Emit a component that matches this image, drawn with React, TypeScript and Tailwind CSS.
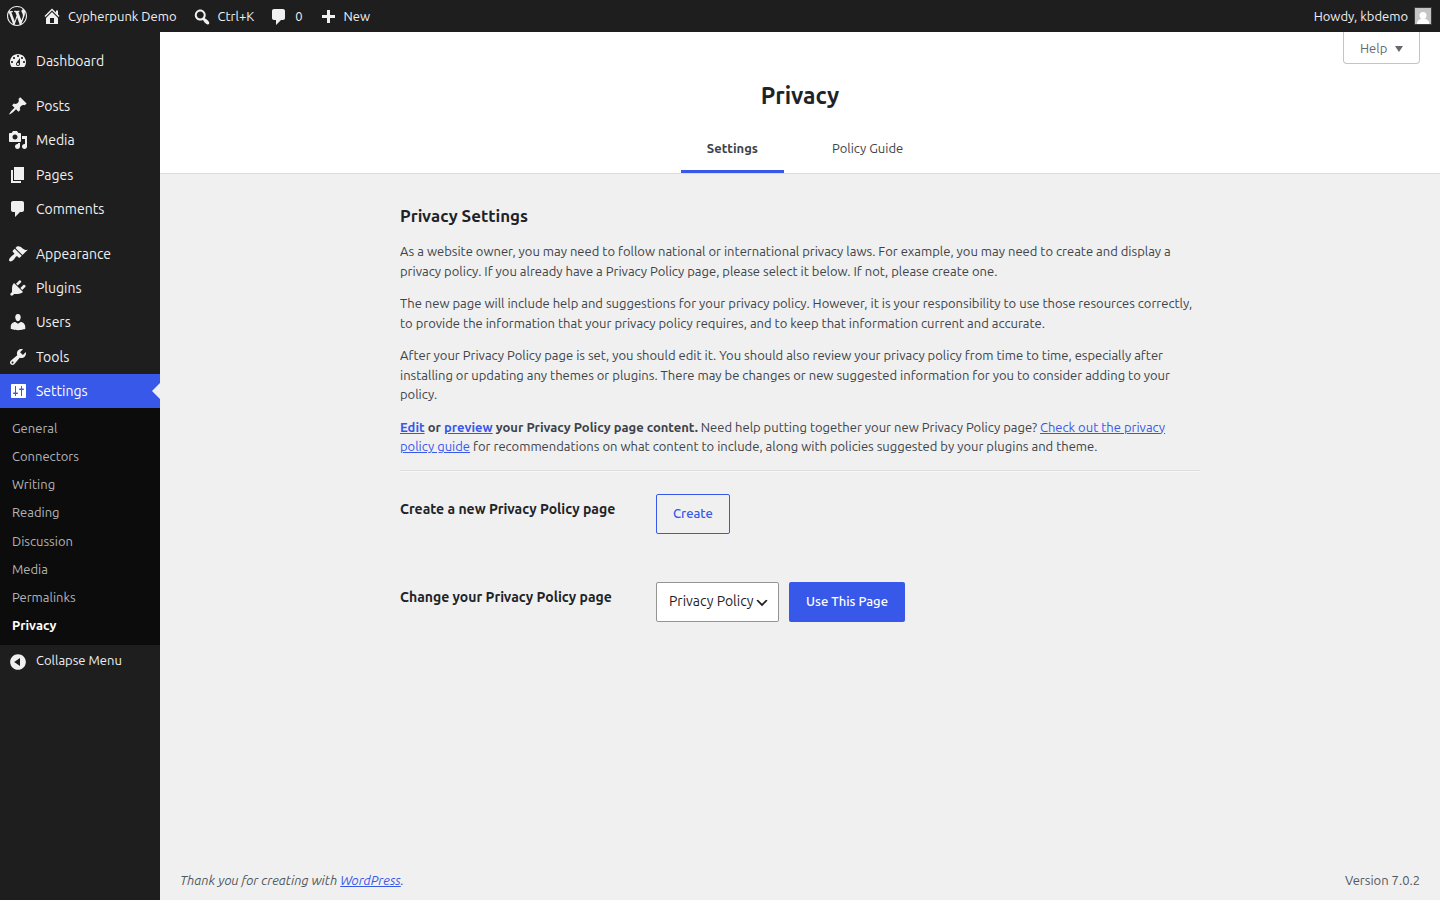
import type { ReactNode } from 'react';

const ICONS = {
  wordpress:
    'M20 10c0-5.51-4.49-10-10-10C4.48 0 0 4.49 0 10c0 5.52 4.48 10 10 10 5.51 0 10-4.48 10-10zM7.78 15.37L4.37 6.22c.55-.02 1.17-.08 1.17-.08.5-.06.44-1.13-.06-1.11 0 0-1.45.11-2.37.11-.18 0-.37 0-.58-.01C4.12 2.69 6.87 1.11 10 1.11c2.33 0 4.45.87 6.05 2.34-.68-.11-1.65.39-1.65 1.58 0 .74.45 1.36.9 2.1.35.61.55 1.36.55 2.46 0 1.49-1.4 5-1.4 5l-3.03-8.37c.54-.02.82-.17.82-.17.5-.05.44-1.25-.06-1.22 0 0-1.44.12-2.38.12-.87 0-2.33-.12-2.33-.12-.5-.03-.56 1.2-.06 1.22l.92.08 1.26 3.41zM17.41 10c.24-.64.74-1.87.43-4.25.7 1.29 1.05 2.71 1.05 4.25 0 3.29-1.73 6.24-4.4 7.78.97-2.59 1.94-5.2 2.92-7.78zM6.1 18.09C3.12 16.65 1.11 13.53 1.11 10c0-1.3.23-2.48.72-3.59C3.25 10.3 4.67 14.2 6.1 18.09zm4.03-6.63l2.58 6.98c-.86.29-1.76.45-2.71.45-.79 0-1.57-.11-2.29-.33.81-2.38 1.62-4.74 2.42-7.1z',
  home: 'M16 8.5l1.53 1.53-1.06 1.06L10 4.6l-6.47 6.49-1.06-1.06L10 2.5l4 4v-2h2v4zm-6-2.46l6 5.99V18H4v-5.97zM12 17v-5H8v5h4z',
  search:
    'M12.14 4.18c1.87 1.87 2.11 4.75.72 6.89.12.1.22.21.36.31.2.16.47.36.81.59.34.24.56.39.66.47.42.31.73.57.94.78.32.32.6.65.84 1 .25.35.44.69.59 1.04.14.35.21.68.18 1-.02.32-.14.59-.36.81s-.49.34-.81.36c-.31.02-.65-.04-.99-.19-.35-.14-.7-.34-1.04-.59-.35-.24-.68-.52-1-.84-.21-.21-.47-.52-.77-.93-.1-.13-.25-.35-.47-.66-.22-.32-.4-.57-.56-.78-.16-.2-.29-.35-.44-.5-2.07 1.09-4.69.76-6.44-.98-2.14-2.15-2.14-5.64 0-7.78 2.15-2.15 5.63-2.15 7.78 0zm-1.41 6.36c1.36-1.37 1.36-3.58 0-4.95-1.37-1.37-3.59-1.37-4.95 0-1.37 1.37-1.37 3.58 0 4.95 1.36 1.37 3.58 1.37 4.95 0z',
  plus: 'M17 7v3h-5v5H9v-5H4V7h5V2h3v5z',
  arrowDown: 'M15 8l-4.03 6L7 8h8z',
  chevron: 'M5 6l5 5 5-5 2 1-7 7-7-7 2-1z',
  dashboard:
    'M3.76 16h12.48c1.1-1.37 1.76-3.11 1.76-5 0-4.42-3.58-8-8-8s-8 3.58-8 8c0 1.89.66 3.63 1.76 5zM10 4c.55 0 1 .45 1 1s-.45 1-1 1-1-.45-1-1 .45-1 1-1zM6 6c.55 0 1 .45 1 1s-.45 1-1 1-1-.45-1-1 .45-1 1-1zm8 0c.55 0 1 .45 1 1s-.45 1-1 1-1-.45-1-1 .45-1 1-1zm-5.37 5.55L12 7v6c0 1.1-.9 2-2 2s-2-.9-2-2c0-.57.24-1.08.63-1.45zM4 10c.55 0 1 .45 1 1s-.45 1-1 1-1-.45-1-1 .45-1 1-1zm12 0c.55 0 1 .45 1 1s-.45 1-1 1-1-.45-1-1 .45-1 1-1zm-5 3c0-.55-.45-1-1-1s-1 .45-1 1 .45 1 1 1 1-.45 1-1z',
  post: 'M10.44 3.02l1.82-1.82 6.36 6.35-1.83 1.82c-1.05-.68-2.48-.57-3.41.36l-.75.75c-.92.93-1.04 2.35-.35 3.41l-1.83 1.82-2.41-2.41-2.8 2.79c-.42.42-3.38 2.71-3.8 2.29s1.86-3.39 2.28-3.81l2.79-2.79L4.1 9.36l1.83-1.82c1.05.69 2.48.57 3.4-.36l.75-.75c.93-.92 1.05-2.35.36-3.41z',
  media:
    'M13 11V4c0-.55-.45-1-1-1h-1.67L9 1H5L3.67 3H2c-.55 0-1 .45-1 1v7c0 .55.45 1 1 1h10c.55 0 1-.45 1-1zM7 4.5c1.38 0 2.5 1.12 2.5 2.5S8.38 9.5 7 9.5 4.5 8.38 4.5 7 5.62 4.5 7 4.5zM14 6h5v10.5c0 1.38-1.12 2.5-2.5 2.5S14 17.88 14 16.5s1.12-2.5 2.5-2.5c.17 0 .34.02.5.05V9h-3V6zm-4 8.05V13h2v3.5c0 1.38-1.12 2.5-2.5 2.5S7 17.88 7 16.5 8.12 14 9.5 14c.17 0 .34.02.5.05z',
  page: 'M6 15V2h10v13H6zm-1 1h8v2H3V5h2v11z',
  comment: 'M5 2h9c1.1 0 2 .9 2 2v7c0 1.1-.9 2-2 2h-2l-5 5v-5H5c-1.1 0-2-.9-2-2V4c0-1.1.9-2 2-2z',
  appearance:
    'M14.48 11.06L7.41 3.99l1.5-1.5c.5-.56 2.3-.47 3.51.32 1.21.8 1.43 1.28 2.91 2.1 1.18.64 2.45 1.26 4.45.85zm-.71.71L6.7 4.7 4.93 6.47c-.39.39-.39 1.02 0 1.41l1.06 1.06c.39.39.39 1.03 0 1.42-.6.6-1.43 1.11-2.21 1.69-.35.26-.7.53-1.01.84C1.43 14.23.4 16.08 1.4 17.07c.99 1 2.84-.03 4.18-1.36.31-.31.58-.66.85-1.02.57-.78 1.08-1.61 1.69-2.21.39-.39 1.02-.39 1.41 0l1.06 1.06c.39.39 1.02.39 1.41 0z',
  plugins:
    'M13.11 4.36L9.87 7.6 8 5.73l3.24-3.24c.35-.34 1.05-.2 1.56.32.52.51.66 1.21.31 1.55zm-8 1.77l.91-1.12 9.01 9.01-1.19.84c-.71.71-2.63 1.16-3.82 1.16H6.14L4.9 17.26c-.59.59-1.54.59-2.12 0-.59-.58-.59-1.53 0-2.12l1.24-1.24v-3.88c0-1.13.4-3.19 1.09-3.89zm7.26 3.97l3.24-3.24c.34-.35 1.04-.21 1.55.31.52.51.66 1.21.31 1.55l-3.24 3.25z',
  users:
    'M10 9.25c-2.27 0-2.73-3.44-2.73-3.44C7 4.02 7.82 2 9.97 2c2.16 0 2.98 2.02 2.71 3.81 0 0-.41 3.44-2.68 3.44zm0 2.57L12.72 10c2.39 0 4.52 2.33 4.52 4.53v2.49s-3.65 1.13-7.24 1.13c-3.65 0-7.24-1.13-7.24-1.13v-2.49c0-2.25 1.94-4.48 4.47-4.48z',
  tools:
    'M16.68 9.77c-1.34 1.34-3.3 1.67-4.95.99l-5.41 6.52c-.99.99-2.59.99-3.58 0s-.99-2.59 0-3.57l6.52-5.42c-.68-1.65-.35-3.61.99-4.95 1.28-1.28 3.12-1.62 4.72-1.06l-2.89 2.89 2.82 2.82 2.86-2.87c.53 1.58.18 3.39-1.08 4.65zM3.81 16.21c.4.39 1.04.39 1.43 0 .4-.4.4-1.04 0-1.43-.39-.4-1.03-.4-1.43 0-.39.39-.39 1.03 0 1.43z',
  settings:
    'M18 16V4c0-.55-.45-1-1-1H4c-.55 0-1 .45-1 1v12c0 .55.45 1 1 1h13c.55 0 1-.45 1-1zM8 11.500h1.300c.4 0 .7.3.7.7s-.3.7-.7.7H8v2.100H7v-2.100H5.700c-.4 0-.7-.3-.7-.7s.3-.7.7-.7H7V5h1zM14 7.500h1.300c.4 0 .7.3.7.7s-.3.7-.7.7H14V15h-1V8.900h-1.300c-.4 0-.7-.3-.7-.7s.3-.7.7-.7H13V5h1z',
  collapse:
    'M10 2.16c4.33 0 7.84 3.51 7.84 7.84s-3.51 7.84-7.84 7.84S2.16 14.33 2.16 10 5.71 2.16 10 2.16zm2 11.72V6.12L6.18 9.97z',
};

type IconName = keyof typeof ICONS;

function Icon({ name, className = 'size-5' }: { name: IconName; className?: string }) {
  return (
    <svg viewBox="0 0 20 20" fill="currentColor" fillRule="evenodd" aria-hidden="true" className={`shrink-0 ${className}`}>
      <path d={ICONS[name]} />
    </svg>
  );
}

const MENU: { label: string; icon: IconName }[][] = [
  [{ label: 'Dashboard', icon: 'dashboard' }],
  [
    { label: 'Posts', icon: 'post' },
    { label: 'Media', icon: 'media' },
    { label: 'Pages', icon: 'page' },
    { label: 'Comments', icon: 'comment' },
  ],
  [
    { label: 'Appearance', icon: 'appearance' },
    { label: 'Plugins', icon: 'plugins' },
    { label: 'Users', icon: 'users' },
    { label: 'Tools', icon: 'tools' },
    { label: 'Settings', icon: 'settings' },
  ],
];

const SUBMENU = ['General', 'Connectors', 'Writing', 'Reading', 'Discussion', 'Media', 'Permalinks', 'Privacy'];

function BarItem({ icon, iconClass, children }: { icon: IconName; iconClass: string; children?: ReactNode }) {
  return (
    <a href="#" className="flex pr-2 pl-[7px]">
      <Icon name={icon} className={`size-5 ${iconClass}`} />
      {children !== undefined && <span className="ml-1.5">{children}</span>}
    </a>
  );
}

function AdminBar() {
  return (
    <header className="flex h-8 justify-between bg-[#1e1e1e] text-[13px] leading-8 text-[#f0f0f1]">
      <nav className="flex">
        <BarItem icon="wordpress" iconClass="mt-1.5" />
        <BarItem icon="home" iconClass="mt-1.5">Cypherpunk Demo</BarItem>
        <BarItem icon="search" iconClass="mt-[7px]">Ctrl+K</BarItem>
        <BarItem icon="comment" iconClass="mt-[7px]">0</BarItem>
        <BarItem icon="plus" iconClass="mt-2">New</BarItem>
      </nav>
      <a href="#" className="flex items-center pr-2">
        Howdy, kbdemo
        <svg viewBox="0 0 16 16" className="ml-1.5 size-[18px] border border-[#3c3c3c] bg-[#c4c4c4]">
          <circle cx="8" cy="7.6" r="3.5" fill="#fff" />
          <path d="M2 16c0-3.2 2-4.8 4.5-5.2h3c2.5.4 4.7 2 4.7 5.2z" fill="#fff" />
        </svg>
      </a>
    </header>
  );
}

function Sidebar() {
  return (
    <aside className="w-40 shrink-0 bg-[#1e1e1e] pt-3 text-[#f0f0f1]">
      {MENU.map((group, i) => (
        <ul key={i} className={i > 0 ? 'mt-[11px]' : ''}>
          {group.map(({ label, icon }) => {
            const active = label === 'Settings';
            return (
              <li key={label}>
                <a
                  href="#"
                  className={`relative flex text-sm leading-[18.2px] ${active ? 'bg-[#3858e9] text-white' : ''}`}
                >
                  <Icon name={icon} className="mx-2 mt-[7px] size-5" />
                  <span className="py-2">{label}</span>
                  {active && (
                    <span className="absolute top-[9px] right-0 border-8 border-l-0 border-transparent border-r-[#f0f0f0]" />
                  )}
                </a>
              </li>
            );
          })}
        </ul>
      ))}
      <ul className="bg-[#0c0c0c] pt-[5.8px] pb-[5.2px] text-[13px] leading-[18.2px]">
        {SUBMENU.map((label) => (
          <li key={label}>
            <a
              href="#"
              className={`block px-3 py-[5px] ${label === 'Privacy' ? 'font-semibold text-white' : 'text-[#b4b4b4]'}`}
            >
              {label}
            </a>
          </li>
        ))}
      </ul>
      <button type="button" className="flex text-[13px] leading-[18.2px]">
        <Icon name="collapse" className="mx-2 mt-[7px] size-5" />
        <span className="pt-1.5">Collapse Menu</span>
      </button>
    </aside>
  );
}

function PageHeader() {
  return (
    <div className="relative flex h-[142px] flex-col items-center border-b border-[#dcdcde] bg-white">
      <button
        type="button"
        className="absolute top-0 right-5 flex h-8 w-[77px] items-center rounded-b border border-t-0 border-[#c3c4c7] pl-4 text-[13px] text-[#646970]"
      >
        <span className="pt-0.5">Help</span>
        <Icon name="arrowDown" className="ml-px size-5" />
      </button>
      <h1 className="mt-[49px] text-[23px] leading-[30px] font-semibold text-[#1d2327]">Privacy</h1>
      <nav className="mt-auto grid grid-cols-2 gap-x-8 text-center text-[13px] leading-[19.5px] text-[#3c434a]">
        <a href="#" className="border-b-[3px] border-[#3858e9] px-4 pb-3 font-semibold">
          Settings
        </a>
        <a href="#" className="px-4">Policy Guide</a>
      </nav>
    </div>
  );
}

function Link({ children, bold }: { children: ReactNode; bold?: boolean }) {
  return (
    <a href="#" className={`text-[#3858e9] underline ${bold ? 'font-semibold' : ''}`}>{children}</a>
  );
}

function SettingRow({ label, children }: { label: string; children: ReactNode }) {
  return (
    <div className="flex h-10">
      <h3 className="w-64 pt-1.5 text-sm leading-[18.2px] font-semibold text-[#1d2327]">{label}</h3>
      <div className="flex gap-2.5 text-[13px] font-medium">{children}</div>
    </div>
  );
}

function PrivacySettings() {
  return (
    <main className="mx-auto w-[800px] pt-[31px]">
      <h2 className="mb-4 text-[16.9px] leading-[21px] font-semibold text-[#1d2327]">Privacy Settings</h2>
      <div className="space-y-[13px]">
        <p>
          As a website owner, you may need to follow national or international privacy laws. For example, you may need
          to create and display a privacy policy. If you already have a Privacy Policy page, please select it below. If
          not, please create one.
        </p>
        <p>
          The new page will include help and suggestions for your privacy policy. However, it is your responsibility to
          use those resources correctly, to provide the information that your privacy policy requires, and to keep that
          information current and accurate.
        </p>
        <p>
          After your Privacy Policy page is set, you should edit it. You should also review your privacy policy from
          time to time, especially after installing or updating any themes or plugins. There may be changes or new
          suggested information for you to consider adding to your policy.
        </p>
        <p>
          <Link bold>Edit</Link>
          <strong className="font-semibold"> or </strong>
          <Link bold>preview</Link>
          <strong className="font-semibold"> your Privacy Policy page content.</strong> Need help putting together your
          new Privacy Policy page? <Link>Check out the privacy policy guide</Link> for recommendations on what content
          to include, along with policies suggested by your plugins and theme.
        </p>
        <hr className="border-t border-b border-t-[#dcdcde] border-b-[#f6f7f7]" />
      </div>
      <div className="mt-[22px] space-y-12">
        <SettingRow label="Create a new Privacy Policy page">
          <button type="button" className="rounded-xs border border-[#3858e9] px-4 text-[#3858e9]">
            Create
          </button>
        </SettingRow>
        <SettingRow label="Change your Privacy Policy page">
          <button
            type="button"
            className="flex w-[123px] items-center justify-between rounded-xs border border-[#949494] bg-white pr-2 pl-3 text-sm font-normal whitespace-nowrap text-[#1e1e1e]"
          >
            <span className="pb-0.5">Privacy Policy</span>
            <Icon name="chevron" className="mt-0.5 size-4" />
          </button>
          <button type="button" className="w-[116px] rounded-xs bg-[#3858e9] text-white">
            Use This Page
          </button>
        </SettingRow>
      </div>
    </main>
  );
}

export default function App() {
  return (
    <div className="flex h-screen flex-col overflow-hidden font-['Ubuntu','Noto_Sans',sans-serif]">
      <AdminBar />
      <div className="flex flex-1">
        <Sidebar />
        <div className="flex flex-1 flex-col bg-[#f0f0f0] text-[13px] leading-[19.5px] text-[#3c434a]">
          <PageHeader />
          <PrivacySettings />
          <footer className="mt-auto flex justify-between px-5 pb-2.5 text-[#50575e]">
            <p className="italic">
              Thank you for creating with <Link>WordPress</Link>.
            </p>
            <p>Version 7.0.2</p>
          </footer>
        </div>
      </div>
    </div>
  );
}
